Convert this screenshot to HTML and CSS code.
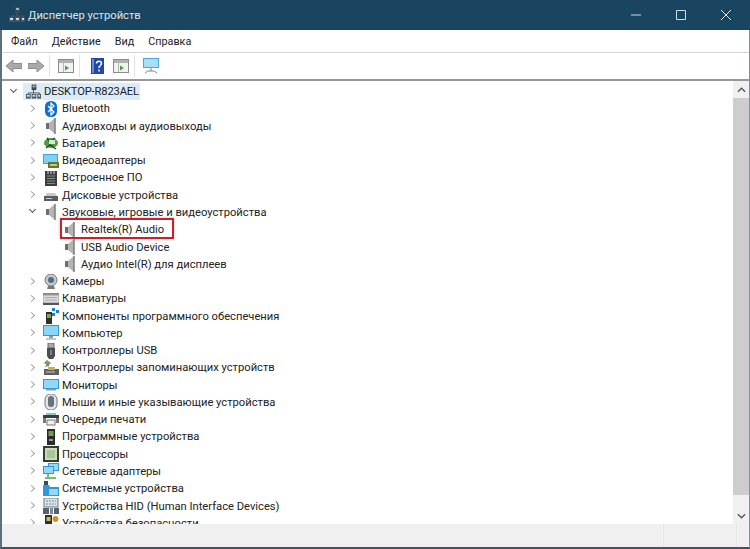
FILE: index.html
```html
<!DOCTYPE html>
<html lang="ru">
<head>
    <meta charset="UTF-8">
    <title>Диспетчер устройств</title>
    <link rel="stylesheet" href="styles.css">
</head>
<body>
    <svg class="sprites" width="0" height="0">
        <symbol id="i-root" viewBox="0 0 16 16">
            <rect x="6" y="0" width="5" height="6" fill="#3c4a55"/><rect x="7" y="1" width="3" height="2" fill="#9fb6c6"/>
            <path d="M8 6v3M2.500 10V9h12v1" stroke="#555" fill="none"/>
            <rect x="0" y="10" width="5" height="5" fill="#4a5660"/><rect x="6" y="10" width="5" height="5" fill="#4a5660"/><rect x="12" y="10" width="4" height="5" fill="#4a5660"/>
            <rect x="1" y="11" width="3" height="2" fill="#cfd8df"/><rect x="7" y="11" width="3" height="2" fill="#cfd8df"/><rect x="13" y="11" width="2" height="2" fill="#cfd8df"/>
        </symbol>
        <symbol id="i-bt" viewBox="0 0 16 16">
            <rect x="2" y="0" width="12" height="16" rx="5.500" fill="#0a6fd0"/>
            <path d="M5 5l6 6-3 3V2l3 3-6 6" stroke="#fff" stroke-width="1.200" fill="none"/>
        </symbol>
        <symbol id="i-speaker" viewBox="0 0 16 16">
            <path d="M3 5h3v6H3z" fill="#6d6d6d"/>
            <path d="M6 5l6-5v16l-6-5z" fill="#b4b4b4"/>
            <path d="M12 0v16" stroke="#7c7c7c" stroke-width="1.500"/>
        </symbol>
        <symbol id="i-battery" viewBox="0 0 16 16">
            <ellipse cx="8" cy="8" rx="7" ry="5" fill="#4f9a49"/>
            <path d="M3 13l4-3 6 4M4 3l3 4 5-4" stroke="#1f4d22" stroke-width="1.500" fill="none"/>
            <rect x="6" y="5" width="6" height="4" fill="#d8e8c8"/>
        </symbol>
        <symbol id="i-video" viewBox="0 0 16 16">
            <rect x="0" y="1" width="15" height="10" fill="#3ea6e0"/>
            <rect x="1" y="2" width="13" height="8" fill="#7fd0f2"/>
            <rect x="5" y="9" width="11" height="6" fill="#5b7a3a"/>
            <rect x="7" y="11" width="7" height="2" fill="#d7c65a"/>
        </symbol>
        <symbol id="i-firmware" viewBox="0 0 16 16">
            <rect x="2" y="1" width="12" height="15" fill="#3d3d3d"/>
            <path d="M5 1v3M8 1v3M11 1v3" stroke="#ddd"/>
            <path d="M4 6h8M4 8.500h8M4 11h8M4 13.500h8" stroke="#8a8a8a"/>
        </symbol>
        <symbol id="i-disk" viewBox="0 0 16 16">
            <path d="M2 9l2-3h8l2 3z" fill="#c9c9c9"/>
            <rect x="1" y="9" width="14" height="5" fill="#5b5b5b"/>
            <path d="M3 11.500h6" stroke="#ccc"/>
        </symbol>
        <symbol id="i-camera" viewBox="0 0 16 16">
            <circle cx="8" cy="6" r="6" fill="#c8c8c8" stroke="#777"/>
            <circle cx="8" cy="6" r="3" fill="#47708a"/>
            <path d="M4 15h8l-1-3H5z" fill="#777"/>
        </symbol>
        <symbol id="i-keyboard" viewBox="0 0 16 16">
            <rect x="0" y="2" width="16" height="2" fill="#8a8a8a"/>
            <rect x="0" y="4" width="16" height="8" fill="#dcdcdc" stroke="#999"/>
            <path d="M2 6.500h12M2 9h12" stroke="#aaa"/>
            <rect x="0" y="12" width="16" height="2" fill="#555"/>
        </symbol>
        <symbol id="i-components" viewBox="0 0 16 16">
            <rect x="3" y="4" width="6" height="12" fill="#2f2f2f"/>
            <rect x="4" y="6" width="4" height="4" fill="#7fa650"/>
            <path d="M9 0h3v3H9zM13 2h3v3h-3zM9 5h3v3H9z" fill="#1d7fd1"/>
        </symbol>
        <symbol id="i-computer" viewBox="0 0 16 16">
            <rect x="0" y="0" width="16" height="11" fill="#2f97dd"/>
            <rect x="1" y="1" width="14" height="9" fill="#8bd6f6"/>
            <path d="M6 11h4v2H6z" fill="#9a9a9a"/>
            <rect x="3" y="13" width="10" height="2" fill="#c4c4c4"/>
        </symbol>
        <symbol id="i-usb" viewBox="0 0 16 16">
            <rect x="5" y="0" width="6" height="5" fill="#aaa" stroke="#666"/>
            <path d="M4 5h8v8l-2 3H6l-2-3z" fill="#4d4d4d"/>
            <path d="M8 7v5" stroke="#bbb"/>
        </symbol>
        <symbol id="i-storage" viewBox="0 0 16 16">
            <path d="M1 3l3-3 4 3-3 3z" fill="#7d9a5a"/>
            <path d="M3 7c0-2 2-2 3-1" stroke="#555" fill="none"/>
            <rect x="1" y="9" width="15" height="6" fill="#5f5f5f"/>
            <rect x="5" y="7" width="7" height="3" fill="#c7b14e"/>
            <path d="M3 12h9" stroke="#ccc"/>
        </symbol>
        <symbol id="i-monitor" viewBox="0 0 16 16">
            <rect x="0" y="2" width="16" height="10" fill="#2f97dd"/>
            <rect x="1" y="3" width="14" height="8" fill="#93d9f7"/>
            <rect x="3" y="12" width="10" height="1.500" fill="#9a9a9a"/>
        </symbol>
        <symbol id="i-mouse" viewBox="0 0 16 16">
            <rect x="2" y="0" width="12" height="16" rx="5.500" fill="#e3e3ea" stroke="#6b7680"/>
            <rect x="5" y="2" width="6" height="11" rx="3" fill="#66727c"/>
        </symbol>
        <symbol id="i-printer" viewBox="0 0 16 16">
            <rect x="0" y="3" width="16" height="3" fill="#3d3d3d"/>
            <path d="M3 1h10v2H3z" fill="#7ccbd0"/>
            <path d="M0 6h3v5H0zM13 6h3v5h-3z" fill="#777"/>
            <rect x="4" y="8" width="8" height="5" fill="#f0f0f0" stroke="#777"/>
        </symbol>
        <symbol id="i-soft" viewBox="0 0 16 16">
            <rect x="4" y="0" width="8" height="16" fill="#2b2b2b"/>
            <rect x="5.500" y="2" width="5" height="5" fill="#6fa04a"/>
            <rect x="6" y="10" width="4" height="2" fill="#9a9a9a"/>
        </symbol>
        <symbol id="i-cpu" viewBox="0 0 16 16">
            <rect x="0" y="0" width="16" height="16" fill="#2f4030"/>
            <rect x="2" y="2" width="12" height="12" fill="#c9dcb8"/>
            <rect x="4" y="4" width="8" height="8" fill="#a8c498"/>
        </symbol>
        <symbol id="i-net" viewBox="0 0 16 16">
            <rect x="5" y="0" width="11" height="8" fill="#2f97dd"/>
            <rect x="6" y="1" width="9" height="6" fill="#93d9f7"/>
            <rect x="0" y="3" width="11" height="8" fill="#2f97dd"/>
            <rect x="1" y="4" width="9" height="6" fill="#93d9f7"/>
            <path d="M5 11v3M2 15h11" stroke="#4ca84a" stroke-width="1.500"/>
        </symbol>
        <symbol id="i-system" viewBox="0 0 16 16">
            <path d="M0 4h6l1 2h9v9H0z" fill="#2f97dd"/>
            <rect x="6" y="8" width="9" height="6" fill="#93d9f7"/>
            <rect x="1" y="0" width="4" height="4" fill="#3d4a55"/>
        </symbol>
        <symbol id="i-hid" viewBox="0 0 16 16">
            <rect x="1" y="0" width="14" height="9" fill="#dbe3ea" stroke="#6b7680"/>
            <path d="M3 3h10M3 6h10" stroke="#7d8a96" stroke-dasharray="2 1"/>
            <rect x="0" y="10" width="6" height="6" fill="#56626c"/>
            <rect x="7" y="10" width="3" height="6" fill="#7d8a96"/>
            <rect x="11" y="10" width="5" height="6" fill="#56626c"/>
        </symbol>
        <symbol id="i-security" viewBox="0 0 16 16">
            <rect x="2" y="0" width="7" height="14" fill="#2f2f2f"/>
            <rect x="3.500" y="2" width="4" height="4" fill="#d4b84a"/>
            <circle cx="12.500" cy="4" r="3" fill="#c7962f"/>
        </symbol>
        <symbol id="i-back" viewBox="0 0 16 16">
            <path d="M0 8l7-6v3.500h9v5H7V14z" fill="#a9a9a9" stroke="#8d8d8d"/>
        </symbol>
        <symbol id="i-forward" viewBox="0 0 16 16">
            <path d="M16 8L9 2v3.500H0v5h9V14z" fill="#a9a9a9" stroke="#8d8d8d"/>
        </symbol>
        <symbol id="i-props" viewBox="0 0 16 16">
            <rect x="0.500" y="1.500" width="15" height="13" fill="#f2f2f2" stroke="#8c8c8c"/>
            <rect x="1" y="2" width="14" height="3" fill="#b0b0b0"/>
            <path d="M5.500 5v9" stroke="#b5b5b5"/>
            <path d="M7 7.500l4 2.500-4 2.500z" fill="#3fa33f"/>
        </symbol>
        <symbol id="i-help" viewBox="0 0 14 16">
            <rect x="0" y="0" width="13" height="16" fill="#2347a8"/>
            <rect x="1" y="1" width="2" height="14" fill="#6f8ad6"/>
            <path d="M5.500 5.500c0-3 5-3 5 0 0 2-2.500 2-2.500 4.500M8 11.500v2" stroke="#fff" stroke-width="1.500" fill="none"/>
        </symbol>
        <symbol id="i-scan" viewBox="0 0 16 16">
            <rect x="0" y="0" width="16" height="10" fill="#4aa6de"/>
            <rect x="1" y="1" width="14" height="8" fill="#a9dff6"/>
            <path d="M8 10v3M2 15l3-2h6l3 2" stroke="#6f8ca0" fill="none"/>
        </symbol>
    </svg>

    <div class="window">
        <header class="titlebar">
            <svg class="title-icon"><use href="#i-root"/></svg>
            <span class="title-text">Диспетчер устройств</span>
            <div class="controls">
                <svg class="control" viewBox="0 0 45 30"><path d="M18 15h10" stroke="#cfdce5" fill="none"/></svg>
                <svg class="control" viewBox="0 0 45 30"><path d="M18.500 10.500h9v9h-9z" stroke="#cfdce5" fill="none"/></svg>
                <svg class="control" viewBox="0 0 45 30"><path d="M18 10l10 10M28 10L18 20" stroke="#e4ecf1" fill="none"/></svg>
            </div>
        </header>

        <nav class="menubar">
            <span class="menu-item">Файл</span>
            <span class="menu-item">Действие</span>
            <span class="menu-item">Вид</span>
            <span class="menu-item">Справка</span>
        </nav>

        <div class="toolbar">
            <svg class="tool tool-back"><use href="#i-back"/></svg>
            <svg class="tool"><use href="#i-forward"/></svg>
            <i class="tool-sep"></i>
            <svg class="tool"><use href="#i-props"/></svg>
            <i class="tool-sep"></i>
            <svg class="tool tool-help"><use href="#i-help"/></svg>
            <svg class="tool"><use href="#i-props"/></svg>
            <i class="tool-sep"></i>
            <svg class="tool"><use href="#i-scan"/></svg>
        </div>

        <main class="content">
            <div class="tree">
                <div class="row row-root">
                    <span class="chevron open"></span>
                    <span class="root-label"><svg class="icon"><use href="#i-root"/></svg><span>DESKTOP-R823AEL</span></span>
                </div>
                <div class="row"><span class="chevron"></span><svg class="icon"><use href="#i-bt"/></svg><span>Bluetooth</span></div>
                <div class="row"><span class="chevron"></span><svg class="icon"><use href="#i-speaker"/></svg><span>Аудиовходы и аудиовыходы</span></div>
                <div class="row"><span class="chevron"></span><svg class="icon"><use href="#i-battery"/></svg><span>Батареи</span></div>
                <div class="row"><span class="chevron"></span><svg class="icon"><use href="#i-video"/></svg><span>Видеоадаптеры</span></div>
                <div class="row"><span class="chevron"></span><svg class="icon"><use href="#i-firmware"/></svg><span>Встроенное ПО</span></div>
                <div class="row"><span class="chevron"></span><svg class="icon"><use href="#i-disk"/></svg><span>Дисковые устройства</span></div>
                <div class="row"><span class="chevron open"></span><svg class="icon"><use href="#i-speaker"/></svg><span>Звуковые, игровые и видеоустройства</span></div>
                <div class="row row-child"><svg class="icon"><use href="#i-speaker"/></svg><span>Realtek(R) Audio</span><i class="highlight"></i></div>
                <div class="row row-child"><svg class="icon"><use href="#i-speaker"/></svg><span>USB Audio Device</span></div>
                <div class="row row-child"><svg class="icon"><use href="#i-speaker"/></svg><span>Аудио Intel(R) для дисплеев</span></div>
                <div class="row"><span class="chevron"></span><svg class="icon"><use href="#i-camera"/></svg><span>Камеры</span></div>
                <div class="row"><span class="chevron"></span><svg class="icon"><use href="#i-keyboard"/></svg><span>Клавиатуры</span></div>
                <div class="row"><span class="chevron"></span><svg class="icon"><use href="#i-components"/></svg><span>Компоненты программного обеспечения</span></div>
                <div class="row"><span class="chevron"></span><svg class="icon"><use href="#i-computer"/></svg><span>Компьютер</span></div>
                <div class="row"><span class="chevron"></span><svg class="icon"><use href="#i-usb"/></svg><span>Контроллеры USB</span></div>
                <div class="row"><span class="chevron"></span><svg class="icon"><use href="#i-storage"/></svg><span>Контроллеры запоминающих устройств</span></div>
                <div class="row"><span class="chevron"></span><svg class="icon"><use href="#i-monitor"/></svg><span>Мониторы</span></div>
                <div class="row"><span class="chevron"></span><svg class="icon"><use href="#i-mouse"/></svg><span>Мыши и иные указывающие устройства</span></div>
                <div class="row"><span class="chevron"></span><svg class="icon"><use href="#i-printer"/></svg><span>Очереди печати</span></div>
                <div class="row"><span class="chevron"></span><svg class="icon"><use href="#i-soft"/></svg><span>Программные устройства</span></div>
                <div class="row"><span class="chevron"></span><svg class="icon"><use href="#i-cpu"/></svg><span>Процессоры</span></div>
                <div class="row"><span class="chevron"></span><svg class="icon"><use href="#i-net"/></svg><span>Сетевые адаптеры</span></div>
                <div class="row"><span class="chevron"></span><svg class="icon"><use href="#i-system"/></svg><span>Системные устройства</span></div>
                <div class="row"><span class="chevron"></span><svg class="icon"><use href="#i-hid"/></svg><span>Устройства HID (Human Interface Devices)</span></div>
                <div class="row"><span class="chevron"></span><svg class="icon"><use href="#i-security"/></svg><span>Устройства безопасности</span></div>
            </div>
            <div class="scrollbar">
                <span class="scroll-btn"><svg viewBox="0 0 10 6"><path d="M1 5l4-4 4 4" stroke="#555" stroke-width="1.500" fill="none"/></svg></span>
                <span class="scroll-thumb"></span>
                <span class="scroll-btn"><svg viewBox="0 0 10 6"><path d="M1 1l4 4 4-4" stroke="#555" stroke-width="1.500" fill="none"/></svg></span>
            </div>
        </main>

        <footer class="statusbar">
            <i class="status-cell status-main"></i>
            <i class="status-cell status-mid"></i>
            <i class="status-cell"></i>
        </footer>
    </div>
</body>
</html>
```

FILE: styles.css
```css
html, body {
    margin: 0;
    padding: 0;
    height: 549px;
    overflow: hidden;
}

body {
    background: #fff;
    font-family: Roboto, "Open Sans", sans-serif;
    font-size: 11.2px;
    color: #222;
}

.sprites {
    position: absolute;
}

.window {
    display: flex;
    flex-direction: column;
    height: 549px;
    box-sizing: border-box;
    border-left: 2px solid #5b6f7c;
    border-right: 1px solid #7d909c;
    border-bottom: 2px solid #3d5566;
}

/* заголовок */
.titlebar {
    display: flex;
    align-items: center;
    height: 30px;
    flex: none;
    margin: 0 -1px 0 -2px;
    background: #1a4560;
    color: #dbe5ec;
}

.title-icon {
    width: 16px;
    height: 16px;
    margin: 0 3px 0 9px;
}

.title-text {
    flex: 1;
}

.controls {
    display: flex;
    margin-right: 2px;
}

.control {
    width: 45px;
    height: 30px;
}

/* меню */
.menubar {
    display: flex;
    gap: 14px;
    align-items: center;
    height: 22px;
    flex: none;
    padding-left: 9px;
    border-bottom: 1px solid #d4d4d4;
    font-size: 10.8px;
}

/* панель инструментов */
.toolbar {
    display: flex;
    align-items: center;
    height: 26px;
    flex: none;
    padding-left: 4px;
    border-bottom: 2px solid #979797;
    background: #fff;
}

.tool {
    width: 16px;
    height: 16px;
    margin-right: 6px;
}

.tool-back {
    margin-right: 6px;
}

.tool-help {
    width: 14px;
    margin-left: 3px;
    margin-right: 8px;
}

.tool-sep {
    width: 1px;
    height: 22px;
    margin: 0 8px 0 -1px;
    background: #e2e2e2;
}

/* дерево */
.content {
    display: flex;
    flex: 1;
    min-height: 0;
}

.tree {
    flex: 1;
    min-width: 0;
    padding-top: 2px;
    overflow: hidden;
}

.row {
    position: relative;
    display: flex;
    align-items: center;
    height: 17.28px;
    padding-left: 25px;
    white-space: nowrap;
}

.row-root {
    padding-left: 6px;
}

.row-child {
    padding-left: 60px;
}

.chevron {
    width: 12px;
    height: 12px;
    margin-right: 4px;
    flex: none;
    position: relative;
}

.chevron::before {
    content: "";
    position: absolute;
    left: 2px;
    top: 3px;
    width: 4px;
    height: 4px;
    border-top: 1px solid #a6a6a6;
    border-right: 1px solid #a6a6a6;
    transform: rotate(45deg);
}

.chevron.open::before {
    left: 3px;
    top: 1px;
    border-color: #555;
    transform: rotate(135deg);
}

.icon {
    width: 16px;
    height: 16px;
    margin-right: 3px;
    flex: none;
}

.root-label {
    display: flex;
    align-items: center;
    gap: 3px;
    height: 17px;
    margin-left: -1px;
    padding: 0 1px 0 3px;
    background: #dcebf8;
    letter-spacing: -0.15px;
}

.root-label .icon {
    width: 15px;
    margin-right: 0;
}

.highlight {
    position: absolute;
    left: 58px;
    top: -3px;
    width: 110px;
    height: 17px;
    border: 2px solid #c9202c;
    box-shadow: 0 0 3px rgba(0, 0, 0, 0.25);
}

/* полоса прокрутки */
.scrollbar {
    display: flex;
    flex-direction: column;
    width: 16px;
    flex: none;
    background: #f0f0f0;
}

.scroll-btn {
    display: flex;
    align-items: center;
    justify-content: center;
    height: 17px;
    flex: none;
}

.scroll-btn svg {
    width: 9px;
    height: 6px;
}

.scroll-thumb {
    flex: 1;
    margin-bottom: 12px;
    background: #cdcdcd;
}

/* строка состояния */
.statusbar {
    display: flex;
    justify-content: flex-end;
    height: 23px;
    flex: none;
    background: #f0f0f0;
}

.status-cell {
    width: 12px;
}

.status-main {
    flex: 1;
    border-right: 1px solid #e6e6e6;
}

.status-mid {
    width: 72px;
    border-right: 1px solid #e6e6e6;
}
```
